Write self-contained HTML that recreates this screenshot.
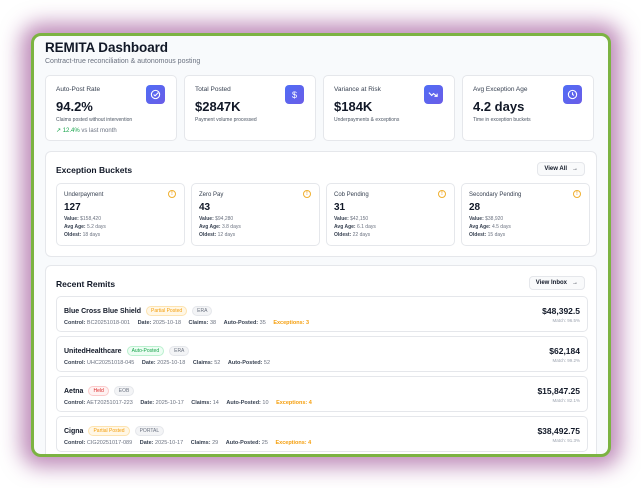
<!DOCTYPE html><html><head><style>
*{box-sizing:border-box;margin:0;padding:0}
body{width:641px;height:488px;background:#fff;font-family:"Liberation Sans",sans-serif;color:#111827;overflow:hidden;position:relative}
.frame{position:absolute;left:31px;top:33px;width:580px;height:424px;border:3px solid #7cb342;border-radius:10px;background:#f8fafc;box-shadow:0 0 20px 10px rgba(130,30,120,.5);overflow:hidden}
.in{position:absolute;left:11px;top:0;width:552px}
h1{font-size:13.5px;font-weight:bold;margin-top:4px;letter-spacing:-.1px}
.sub{font-size:7px;color:#6b7280;margin-top:3px}
.stats{display:flex;gap:7px;margin-top:10px}
.st{width:132px;height:66px;background:#fff;border:1px solid #e5e7eb;border-radius:5px;position:relative;padding:10px 10px}
.st .l{font-size:6.5px;color:#374151}
.st .v{font-size:13px;font-weight:bold;margin-top:6px}
.st .d{font-size:5px;color:#4b5563;margin-top:3px}
.st .g{font-size:6px;color:#16a34a;margin-top:4px}
.ic{position:absolute;right:11px;top:9px;width:19px;height:19px;border-radius:4px;background:linear-gradient(135deg,#4f6df5,#6b5ce7);color:#fff;font-size:9px;display:flex;align-items:center;justify-content:center}
.panel{background:#fff;border:1px solid #e5e7eb;border-radius:6px;position:relative}
.ph{font-size:8.5px;font-weight:bold;position:absolute;left:10px;top:13px}
.btn{position:absolute;right:11px;top:10px;height:14px;padding:0 6px;border:1px solid #e5e7eb;border-radius:4px;background:#f9fafb;font-size:6px;font-weight:bold;display:flex;align-items:center;gap:5px}
.bk{display:flex;gap:6px;position:absolute;left:10px;top:31px}
.b{width:129px;height:63px;border:1px solid #e5e7eb;border-radius:5px;padding:8px 7px;position:relative}
.b .l{font-size:6px;color:#374151}
.b .v{font-size:10px;font-weight:bold;margin-top:4px}
.b .m{font-size:5px;color:#6b7280;margin-top:2px;line-height:8px}
.b .m b{color:#374151}
.w{position:absolute;right:8px;top:6px;width:8px;height:8px;border:1px solid #f0b030;border-radius:50%;font-size:5px;color:#f0a020;text-align:center;line-height:6px;font-weight:bold}
.row{position:absolute;left:10px;width:532px;height:36px;border:1px solid #e5e7eb;border-radius:5px;background:#fff}
.row .n{position:absolute;left:7px;top:9px;font-size:7px;font-weight:bold;display:flex;align-items:center;gap:5px}
.tag{font-size:5px;font-weight:normal;padding:1px 4px;border-radius:6px;border:1px solid}
.po{background:#fff7e6;color:#f59e0b;border-color:#fde3b0}
.ap{background:#ecfdf3;color:#16a34a;border-color:#bbf0cf}
.he{background:#fef2f2;color:#dc2626;border-color:#fbcaca}
.ty{background:#f3f4f6;color:#6b7280;border-color:#e5e7eb}
.row .m{position:absolute;left:7px;top:23px;font-size:5.5px;color:#6b7280;white-space:nowrap}
.row .m b{color:#374151;margin-left:6px}.row .m b:first-child{margin-left:0}
.row .m .e{color:#f59e0b;font-weight:bold;margin-left:6px}
.row .a{position:absolute;right:7px;top:9px;font-size:8.5px;font-weight:bold;text-align:right}
.row .a div{font-size:4.5px;color:#9ca3af;font-weight:normal;margin-top:2px}
</style></head><body>
<div class="frame"><div class="in">
<h1>REMITA Dashboard</h1>
<div class="sub">Contract-true reconciliation &amp; autonomous posting</div>
<div class="stats">
<div class="st"><div class="l">Auto-Post Rate</div><div class="v">94.2%</div><div class="d">Claims posted without intervention</div><div class="g">↗ 12.4% <span style="color:#6b7280">vs last month</span></div><div class="ic"><svg width="11" height="11" viewBox="0 0 12 12" fill="none" stroke="#fff" stroke-width="1.2"><circle cx="6" cy="6" r="4.5"/><path d="M4 6l1.5 1.5L9 4"/></svg></div></div>
<div class="st"><div class="l">Total Posted</div><div class="v">$2847K</div><div class="d">Payment volume processed</div><div class="ic">$</div></div>
<div class="st"><div class="l">Variance at Risk</div><div class="v">$184K</div><div class="d">Underpayments &amp; exceptions</div><div class="ic"><svg width="11" height="11" viewBox="0 0 12 12" fill="none" stroke="#fff" stroke-width="1.2"><path d="M1 4l3 3 2-2 4 3M10 5v3H7"/></svg></div></div>
<div class="st"><div class="l">Avg Exception Age</div><div class="v">4.2 days</div><div class="d">Time in exception buckets</div><div class="ic"><svg width="11" height="11" viewBox="0 0 12 12" fill="none" stroke="#fff" stroke-width="1.2"><circle cx="6" cy="6" r="4.5"/><path d="M6 3.5V6l1.5 1"/></svg></div></div>
</div>
<div class="panel" style="position:absolute;left:0;top:115px;width:552px;height:106px">
<div class="ph">Exception Buckets</div><div class="btn">View All <span>→</span></div>
<div class="bk">
<div class="b"><div class="l">Underpayment</div><div class="v">127</div><div class="m"><b>Value:</b> $158,420<br><b>Avg Age:</b> 5.2 days<br><b>Oldest:</b> 18 days</div><div class="w">!</div></div>
<div class="b"><div class="l">Zero Pay</div><div class="v">43</div><div class="m"><b>Value:</b> $94,280<br><b>Avg Age:</b> 3.8 days<br><b>Oldest:</b> 12 days</div><div class="w">!</div></div>
<div class="b"><div class="l">Cob Pending</div><div class="v">31</div><div class="m"><b>Value:</b> $42,150<br><b>Avg Age:</b> 6.1 days<br><b>Oldest:</b> 22 days</div><div class="w">!</div></div>
<div class="b"><div class="l">Secondary Pending</div><div class="v">28</div><div class="m"><b>Value:</b> $38,920<br><b>Avg Age:</b> 4.5 days<br><b>Oldest:</b> 15 days</div><div class="w">!</div></div>
</div></div>
<div class="panel" style="position:absolute;left:0;top:229px;width:552px;height:220px">
<div class="ph">Recent Remits</div><div class="btn">View Inbox <span>→</span></div>
<div class="row" style="top:30px"><div class="n">Blue Cross Blue Shield <span class="tag po">Partial Posted</span><span class="tag ty">ERA</span></div><div class="m"><b>Control:</b> BC20251018-001 <b>Date:</b> 2025-10-18 <b>Claims:</b> 38 <b>Auto-Posted:</b> 35 <span class="e">Exceptions: 3</span></div><div class="a">$48,392.5<div>Match: 96.5%</div></div></div>
<div class="row" style="top:70px"><div class="n">UnitedHealthcare <span class="tag ap">Auto-Posted</span><span class="tag ty">ERA</span></div><div class="m"><b>Control:</b> UHC20251018-045 <b>Date:</b> 2025-10-18 <b>Claims:</b> 52 <b>Auto-Posted:</b> 52</div><div class="a">$62,184<div>Match: 99.2%</div></div></div>
<div class="row" style="top:110px"><div class="n">Aetna <span class="tag he">Held</span><span class="tag ty">EOB</span></div><div class="m"><b>Control:</b> AET20251017-223 <b>Date:</b> 2025-10-17 <b>Claims:</b> 14 <b>Auto-Posted:</b> 10 <span class="e">Exceptions: 4</span></div><div class="a">$15,847.25<div>Match: 82.1%</div></div></div>
<div class="row" style="top:150px"><div class="n">Cigna <span class="tag po">Partial Posted</span><span class="tag ty">PORTAL</span></div><div class="m"><b>Control:</b> CIG20251017-089 <b>Date:</b> 2025-10-17 <b>Claims:</b> 29 <b>Auto-Posted:</b> 25 <span class="e">Exceptions: 4</span></div><div class="a">$38,492.75<div>Match: 91.3%</div></div></div>
</div>
</div></div>
</body></html>
